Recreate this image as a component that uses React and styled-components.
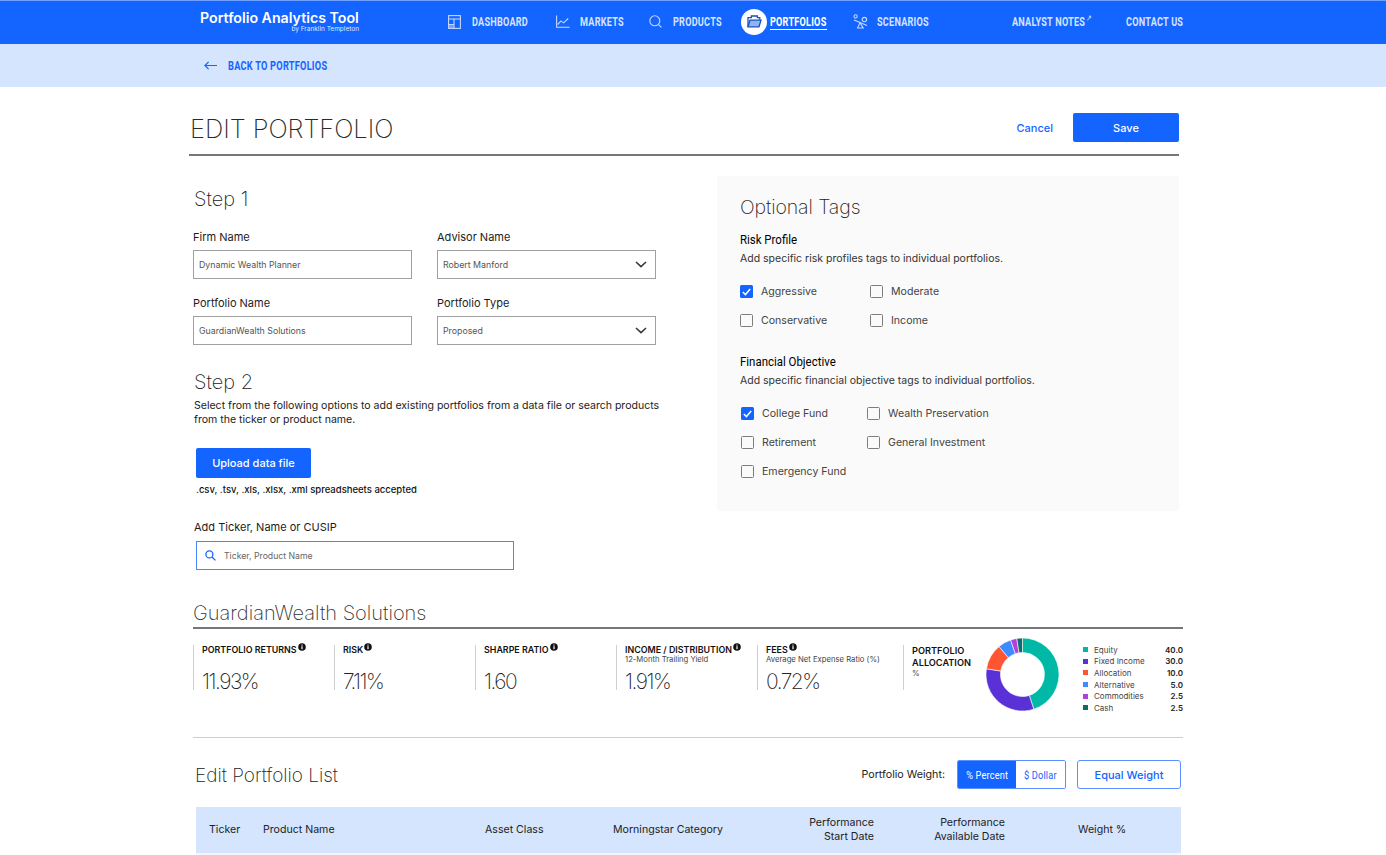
import React from "react";
import styled, { createGlobalStyle } from "styled-components";

const BLUE = "#1464ff";
const PALE = "#d5e5fd";
const BODY = '"Inter", "Liberation Sans", sans-serif';
const NARROW = '"Roboto", "Liberation Sans", sans-serif';

const GlobalStyle = createGlobalStyle`
  html, body { margin: 0; padding: 0; background: #fff; }
  body { font-family: ${BODY}; color: #1c1c1c; }
  * { box-sizing: border-box; }
`;

const navItems = [
  { label: "DASHBOARD", icon: "dashboard", w: 57 },
  { label: "MARKETS", icon: "markets", w: 42 },
  { label: "PRODUCTS", icon: "products", w: 49 },
  { label: "PORTFOLIOS", icon: "portfolios", w: 57, active: true },
  { label: "SCENARIOS", icon: "scenarios", w: 53 },
];

const stats = [
  { title: "PORTFOLIO RETURNS", value: "11.93%", info: true },
  { title: "RISK", value: "7.11%", info: true },
  { title: "SHARPE RATIO", value: "1.60", info: true },
  { title: "INCOME / DISTRIBUTION", sub: "12-Month Trailing Yield", value: "1.91%", info: true },
  { title: "FEES", sub: "Average Net Expense Ratio (%)", value: "0.72%", info: true },
];

// sweep is measured from the picture, the legend numbers are what it prints
const allocation = [
  { name: "Equity", value: "40.0", color: "#00b8a6", sweep: 162 },
  { name: "Fixed Income", value: "30.0", color: "#5a31d6", sweep: 117 },
  { name: "Allocation", value: "10.0", color: "#ff5533", sweep: 41 },
  { name: "Alternative", value: "5.0", color: "#3d8bff", sweep: 21 },
  { name: "Commodities", value: "2.5", color: "#b23fe0", sweep: 10 },
  { name: "Cash", value: "2.5", color: "#0b6e6a", sweep: 9 },
];

function NavIcon({ name }) {
  const common = { fill: "none", stroke: "#c5d9ff", strokeWidth: 1.1 };
  if (name === "dashboard")
    return (
      <svg width="13" height="14" viewBox="0 0 13 14" {...common}>
        <rect x="0.6" y="0.6" width="11.8" height="12.8" />
        <path d="M0.6 4h11.8M6 4v9.4M0.6 9.5H6" />
        <rect x="1" y="10" width="4.6" height="3" fill="#c5d9ff" fillOpacity=".5" stroke="none" />
      </svg>
    );
  if (name === "markets")
    return (
      <svg width="14" height="13" viewBox="0 0 14 13" {...common}>
        <path d="M0.6 0.5v11.7h13" />
        <path d="M1.6 9.5l3.4-3.6 2.6 2 4.6-4.4" />
      </svg>
    );
  if (name === "products")
    return (
      <svg width="13" height="13" viewBox="0 0 13 13" {...common}>
        <circle cx="5.8" cy="5.8" r="5" />
        <path d="M9.4 9.4l3 3" />
      </svg>
    );
  if (name === "portfolios")
    return (
      <svg width="15" height="13" viewBox="0 0 15 13" fill="none" stroke="#1c4fb8" strokeWidth="1.3">
        <path d="M1 11.8V2.6h3.4V1h6v1.6h2.4v2.2" />
        <path d="M1 11.8l2-6.6h11l-2 6.6z" fill="#8fb4f7" />
      </svg>
    );
  return (
    <svg width="15" height="15" viewBox="0 0 15 15" {...common}>
      <circle cx="2.6" cy="2.4" r="1.6" />
      <circle cx="11.4" cy="5.6" r="2.2" />
      <path d="M1 6l13 5.4" />
      <path d="M7 8.6L4.6 14h5.6z" />
    </svg>
  );
}

function InfoDot() {
  return (
    <InfoMark viewBox="0 0 8 8">
      <circle cx="4" cy="4" r="3.8" fill="#111" />
      <rect x="3.4" y="3.2" width="1.2" height="3" fill="#fff" />
      <rect x="3.4" y="1.6" width="1.2" height="1" fill="#fff" />
    </InfoMark>
  );
}

function Chevron() {
  return (
    <ChevronMark width="12" height="7" viewBox="0 0 12 7" fill="none" stroke="#3a3a3a" strokeWidth="1.6">
      <path d="M1 1l5 4.6L11 1" />
    </ChevronMark>
  );
}

function Check({ label, checked }) {
  return (
    <CheckRow>
      <Box $checked={checked}>
        {checked && (
          <svg width="9" height="8" viewBox="0 0 9 8" fill="none" stroke="#fff" strokeWidth="1.5">
            <path d="M0.8 4l2.6 2.6L8.2 1" />
          </svg>
        )}
      </Box>
      {label}
    </CheckRow>
  );
}

function arc(start, sweep, r, R) {
  const pt = (rad, deg) => {
    const a = ((deg - 90) * Math.PI) / 180;
    return `${(R + rad * Math.cos(a)).toFixed(2)} ${(R + rad * Math.sin(a)).toFixed(2)}`;
  };
  const end = start + sweep;
  const big = sweep > 180 ? 1 : 0;
  return `M${pt(R, start)}A${R} ${R} 0 ${big} 1 ${pt(R, end)}L${pt(r, end)}A${r} ${r} 0 ${big} 0 ${pt(r, start)}Z`;
}

function Donut() {
  let at = 0;
  return (
    <DonutWrap width="73" height="73" viewBox="0 0 73 73">
      {allocation.map((s) => {
        const d = arc(at, s.sweep, 22, 36.5);
        at += s.sweep;
        return <path key={s.name} d={d} fill={s.color} stroke="#fff" strokeWidth="0.6" />;
      })}
    </DonutWrap>
  );
}

export default function App() {
  return (
    <Page>
      <GlobalStyle />
      <Header>
        <Logo>
          <LogoName>Portfolio Analytics Tool</LogoName>
          <LogoBy>by Franklin Templeton</LogoBy>
        </Logo>
        <Nav>
          {navItems.map((item) => (
            <NavItem key={item.label} $active={item.active}>
              <IconSpot $active={item.active}>
                <NavIcon name={item.icon} />
              </IconSpot>
              <NavLabel $w={item.w} $active={item.active}>
                <NavText $active={item.active}>{item.label}</NavText>
              </NavLabel>
            </NavItem>
          ))}
        </Nav>
        <NavRight>
          <NavLabel $w={81}>
            <NavText>
              ANALYST NOTES<Sup>↗</Sup>
            </NavText>
          </NavLabel>
          <NavLabel $w={57}>
            <NavText>CONTACT US</NavText>
          </NavLabel>
        </NavRight>
      </Header>

      <SubBar>
        <svg width="13" height="9" viewBox="0 0 13 9" fill="none" stroke={BLUE} strokeWidth="1.2">
          <path d="M13 4.5H1M4.6 0.8L0.9 4.5l3.7 3.7" />
        </svg>
        <BackLink>BACK TO PORTFOLIOS</BackLink>
      </SubBar>

      <Main>
        <TitleRow>
          <Title>EDIT PORTFOLIO</Title>
          <TitleActions>
            <CancelLink>Cancel</CancelLink>
            <PrimaryButton $w={106}>Save</PrimaryButton>
          </TitleActions>
        </TitleRow>

        <Columns>
          <LeftCol>
            <StepHeading>Step 1</StepHeading>
            <FieldGrid>
              <Field>
                <FieldLabel>Firm Name</FieldLabel>
                <Input>Dynamic Wealth Planner</Input>
              </Field>
              <Field>
                <FieldLabel>Advisor Name</FieldLabel>
                <Input>
                  Robert Manford
                  <Chevron />
                </Input>
              </Field>
              <Field>
                <FieldLabel>Portfolio Name</FieldLabel>
                <Input>GuardianWealth Solutions</Input>
              </Field>
              <Field>
                <FieldLabel>Portfolio Type</FieldLabel>
                <Input>
                  Proposed
                  <Chevron />
                </Input>
              </Field>
            </FieldGrid>

            <StepHeading $second>Step 2</StepHeading>
            <StepText>
              Select from the following options to add existing portfolios from a data file or search products
              from the ticker or product name.
            </StepText>
            <UploadBlock>
              <PrimaryButton $w={115} $h={30}>Upload data file</PrimaryButton>
              <Accepted>.csv, .tsv, .xls, .xlsx, .xml spreadsheets accepted</Accepted>
              <TickerLabel>Add Ticker, Name or CUSIP</TickerLabel>
              <SearchBox>
                <svg width="11" height="11" viewBox="0 0 11 11" fill="none" stroke={BLUE} strokeWidth="1.3">
                  <circle cx="4.4" cy="4.4" r="3.5" />
                  <path d="M7 7l3.4 3.4" />
                </svg>
                Ticker, Product Name
              </SearchBox>
            </UploadBlock>
          </LeftCol>

          <TagsPanel>
            <TagsTitle>Optional Tags</TagsTitle>
            <TagHeading>Risk Profile</TagHeading>
            <TagText>Add specific risk profiles tags to individual portfolios.</TagText>
            <CheckGrid $cols="130px 130px">
              <Check label="Aggressive" checked />
              <Check label="Moderate" />
              <Check label="Conservative" />
              <Check label="Income" />
            </CheckGrid>
            <TagHeading $second>Financial Objective</TagHeading>
            <TagText>Add specific financial objective tags to individual portfolios.</TagText>
            <CheckGrid $cols="126px 130px" $shift={1}>
              <Check label="College Fund" checked />
              <Check label="Wealth Preservation" />
              <Check label="Retirement" />
              <Check label="General Investment" />
              <Check label="Emergency Fund" />
            </CheckGrid>
          </TagsPanel>
        </Columns>

        <Summary>
          <SummaryTitle>GuardianWealth Solutions</SummaryTitle>
          <StatsRow>
            {stats.map((s) => (
              <Stat key={s.title}>
                <StatTitle>
                  {s.title}
                  {s.info && <InfoDot />}
                </StatTitle>
                {s.sub && <StatSub>{s.sub}</StatSub>}
                <StatValue>{s.value}</StatValue>
              </Stat>
            ))}
            <AllocationCell>
              <AllocationHead>
                <StatTitle $tall>
                  PORTFOLIO
                  <br />
                  ALLOCATION
                </StatTitle>
                <StatSub>%</StatSub>
              </AllocationHead>
              <Donut />
              <Legend>
                {allocation.map((a) => (
                  <LegendRow key={a.name}>
                    <Swatch $color={a.color} />
                    <LegendName>{a.name}</LegendName>
                    <LegendValue>{a.value}</LegendValue>
                  </LegendRow>
                ))}
              </Legend>
            </AllocationCell>
          </StatsRow>
        </Summary>

        <ListHead>
          <ListTitle>Edit Portfolio List</ListTitle>
          <WeightTools>
            <WeightLabel>Portfolio Weight:</WeightLabel>
            <Toggle>
              <ToggleOption $on>
                <ToggleText>% Percent</ToggleText>
              </ToggleOption>
              <ToggleOption>
                <ToggleText>$ Dollar</ToggleText>
              </ToggleOption>
            </Toggle>
            <OutlineButton>Equal Weight</OutlineButton>
          </WeightTools>
        </ListHead>

        <TableHead>
          <span>Ticker</span>
          <span>Product Name</span>
          <span>Asset Class</span>
          <span>Morningstar Category</span>
          <RightCell>
            Performance
            <br />
            Start Date
          </RightCell>
          <RightCell>
            Performance
            <br />
            Available Date
          </RightCell>
          <WeightCell>Weight %</WeightCell>
        </TableHead>
        <TableRowStub />
      </Main>
    </Page>
  );
}

const Page = styled.div`
  height: 100vh;
  overflow: hidden;
`;

const Header = styled.header`
  height: 44px;
  background: ${BLUE};
  border-top: 1px solid #6f9fff;
  display: flex;
  align-items: center;
  padding: 0 203px 2px 200px;
`;

const Logo = styled.div`
  width: 248px;
  display: flex;
  flex-direction: column;
`;

const LogoName = styled.div`
  width: 159px;
  font-size: 14.2px;
  font-weight: 600;
  line-height: 15px;
  color: #fff;
  white-space: nowrap;
`;

const LogoBy = styled.div`
  width: 159px;
  text-align: right;
  font-size: 6.5px;
  line-height: 8px;
  color: #dfe9ff;
`;

const Nav = styled.nav`
  display: flex;
  align-items: center;
  gap: 27px;
`;

const NavItem = styled.div`
  display: flex;
  align-items: center;
  gap: ${(p) => (p.$active ? "3px" : "9px")};
  margin: 0 ${(p) => (p.$active ? "-1px" : "0")} 0 ${(p) => (p.$active ? "-8px" : "0")};
`;

const IconSpot = styled.span`
  display: flex;
  align-items: center;
  justify-content: ${(p) => (p.$active ? "center" : "flex-start")};
  width: ${(p) => (p.$active ? "26px" : "15px")};
  height: ${(p) => (p.$active ? "26px" : "15px")};
  border-radius: 50%;
  background: ${(p) => (p.$active ? "#fff" : "transparent")};
`;

const NavLabel = styled.span`
  display: flex;
  align-items: flex-start;
  width: ${(p) => p.$w}px;
  height: ${(p) => (p.$active ? "15px" : "14px")};
  margin-top: ${(p) => (p.$active ? "1px" : "0")};
  border-bottom: ${(p) => (p.$active ? "1px solid #fff" : "0")};
`;

const NavText = styled.span`
  display: block;
  font-family: ${NARROW};
  font-weight: 700;
  font-size: 12px;
  line-height: 14px;
  letter-spacing: 0.3px;
  color: ${(p) => (p.$active ? "#fff" : "#d5e3ff")};
  white-space: nowrap;
  transform: scaleX(0.76);
  transform-origin: 0 50%;
`;

const Sup = styled.sup`
  font-size: 9px;
  font-weight: 400;
  line-height: 0;
  margin-left: 1px;
`;

const NavRight = styled.div`
  margin-left: auto;
  display: flex;
  gap: 33px;
`;

const SubBar = styled.div`
  height: 43px;
  background: ${PALE};
  display: flex;
  align-items: center;
  gap: 11px;
  padding-left: 204px;
`;

const BackLink = styled.span`
  font-family: ${NARROW};
  font-weight: 700;
  font-size: 12px;
  letter-spacing: 0.3px;
  color: ${BLUE};
  transform: scaleX(0.77);
  transform-origin: 0 50%;
`;

const Main = styled.main`
  width: 994px;
  margin-left: 189px;
`;

const TitleRow = styled.div`
  width: 990px;
  display: flex;
  align-items: center;
  justify-content: space-between;
  padding: 26px 0 12px;
  border-bottom: 2px solid #77777a;
`;

const Title = styled.h1`
  margin: 2px 0 0 1px;
  font-size: 25.5px;
  line-height: 27px;
  font-weight: 200;
  letter-spacing: -0.05px;
  color: #2a2a2a;
`;

const TitleActions = styled.div`
  display: flex;
  align-items: center;
  gap: 20px;
`;

const CancelLink = styled.span`
  font-size: 11px;
  font-weight: 500;
  color: ${BLUE};
`;

const PrimaryButton = styled.div`
  width: ${(p) => p.$w}px;
  height: ${(p) => p.$h || 29}px;
  border-radius: 2px;
  background: ${BLUE};
  color: #fff;
  font-size: 11px;
  font-weight: 500;
  display: flex;
  align-items: center;
  justify-content: center;
`;

const Columns = styled.div`
  display: flex;
  margin-top: 20px;
  padding-left: 4px;
`;

const LeftCol = styled.div`
  width: 524px;
  padding-top: 10px;
`;

const StepHeading = styled.h2`
  margin: ${(p) => (p.$second ? "24px" : "0")} 0 0 1px;
  font-size: 20px;
  line-height: 26px;
  font-weight: 200;
  color: #222;
`;

const FieldGrid = styled.div`
  display: grid;
  grid-template-columns: 219px 219px;
  column-gap: 25px;
  row-gap: 17px;
  margin-top: 18px;
`;

const Field = styled.div``;

const FieldLabel = styled.div`
  font-size: 11px;
  line-height: 14px;
  color: #1c1c1c;
  margin-bottom: 6px;
`;

const Input = styled.div`
  height: 29px;
  border: 1px solid #a0a0a0;
  border-bottom-width: 1.5px;
  display: flex;
  align-items: center;
  justify-content: space-between;
  padding: 0 8px 0 5px;
  font-size: 8.8px;
  color: #555;
`;

const ChevronMark = styled.svg`
  flex: none;
`;

const StepText = styled.p`
  margin: 4px 0 0 1px;
  width: 480px;
  font-size: 10.55px;
  line-height: 14px;
  color: #222;
`;

const UploadBlock = styled.div`
  margin-top: 21px;
  padding-left: 3px;
`;

const Accepted = styled.div`
  margin-top: 6px;
  font-size: 9.5px;
  line-height: 12px;
  font-weight: 500;
  color: #111;
`;

const TickerLabel = styled.div`
  margin: 24px 0 0 -2px;
  font-size: 11px;
  line-height: 14px;
  color: #1c1c1c;
`;

const SearchBox = styled.div`
  margin-top: 7px;
  width: 318px;
  height: 29px;
  border: 1px solid #4d86ff;
  display: flex;
  align-items: center;
  gap: 8px;
  padding-left: 8px;
  font-size: 8.7px;
  color: #666;
`;

const TagsPanel = styled.section`
  width: 462px;
  height: 335px;
  background: #fafafa;
  padding: 19px 0 0 23px;
`;

const TagsTitle = styled.h2`
  margin: 0;
  font-size: 19.5px;
  line-height: 24px;
  font-weight: 200;
  letter-spacing: -0.1px;
  color: #222;
`;

const TagHeading = styled.h3`
  margin: ${(p) => (p.$second ? "19px" : "13px")} 0 0;
  font-family: ${NARROW};
  font-size: 13px;
  line-height: 16px;
  font-weight: 400;
  color: #000;
  transform: scaleX(0.88);
  transform-origin: 0 50%;
`;

const TagText = styled.p`
  margin: 4px 0 0;
  font-size: 10.5px;
  line-height: 14px;
  color: #333;
`;

const CheckGrid = styled.div`
  display: grid;
  grid-template-columns: ${(p) => p.$cols};
  grid-auto-rows: 29px;
  margin-top: 11px;
  margin-left: ${(p) => p.$shift || 0}px;
`;

const CheckRow = styled.label`
  display: flex;
  align-items: center;
  gap: 8px;
  font-size: 10.6px;
  color: #444;
`;

const Box = styled.span`
  width: 13px;
  height: 13px;
  border-radius: 1.5px;
  display: flex;
  align-items: center;
  justify-content: center;
  background: ${(p) => (p.$checked ? BLUE : "transparent")};
  border: ${(p) => (p.$checked ? "0" : "1px solid #7d7d7d")};
`;

const Summary = styled.section`
  margin-top: 30px;
  margin-left: 4px;
`;

const SummaryTitle = styled.h2`
  margin: 0;
  font-size: 20px;
  line-height: 26px;
  font-weight: 200;
  color: #333;
  border-bottom: 2px solid #77777a;
  padding-bottom: 1px;
`;

const StatsRow = styled.div`
  margin-top: 16px;
  height: 93px;
  border-bottom: 1px solid #cfcfcf;
  display: flex;
  align-items: flex-start;
`;

const Stat = styled.div`
  width: 141px;
  height: 45px;
  border-left: 1px solid #cfcfcf;
  padding-left: 8px;
  position: relative;
`;

const StatTitle = styled.div`
  font-size: ${(p) => (p.$tall ? "9.2px" : "8.9px")};
  line-height: ${(p) => (p.$tall ? "11.5px" : "9px")};
  font-weight: 600;
  color: #111;
  white-space: nowrap;
  display: ${(p) => (p.$tall ? "block" : "flex")};
  align-items: flex-start;
`;

const InfoMark = styled.svg`
  width: 8px;
  height: 8px;
  margin: -2px 0 0 1px;
`;

const StatSub = styled.div`
  font-size: 7.7px;
  line-height: 11px;
  color: #444;
`;

const StatValue = styled.div`
  position: absolute;
  left: 8px;
  bottom: -4px;
  font-size: 21px;
  line-height: 24px;
  font-weight: 200;
  letter-spacing: -1.5px;
  color: #222;
`;

const AllocationCell = styled.div`
  flex: 1;
  display: flex;
  align-items: flex-start;
  margin-left: 5px;
`;

const AllocationHead = styled.div`
  width: 83px;
  height: 45px;
  border-left: 1px solid #cfcfcf;
  padding-left: 8px;
`;

const DonutWrap = styled.svg`
  flex: none;
  margin: -7px 0 0 0;
`;

const Legend = styled.div`
  width: 100px;
  margin: -1px 0 0 24px;
`;

const LegendRow = styled.div`
  display: flex;
  align-items: center;
  height: 11.6px;
  font-size: 8px;
  color: #444;
`;

const Swatch = styled.span`
  width: 5px;
  height: 5px;
  background: ${(p) => p.$color};
  margin-right: 6px;
`;

const LegendName = styled.span`
  flex: 1;
`;

const LegendValue = styled.span`
  font-weight: 600;
  color: #222;
`;

const ListHead = styled.div`
  margin: 22px 2px 0 6px;
  display: flex;
  align-items: center;
  justify-content: space-between;
`;

const ListTitle = styled.h2`
  margin: 3px 0 0;
  font-size: 19px;
  line-height: 26px;
  font-weight: 200;
  color: #222;
`;

const WeightTools = styled.div`
  display: flex;
  align-items: center;
`;

const WeightLabel = styled.span`
  font-size: 10.7px;
  color: #222;
  margin-right: 12px;
`;

const Toggle = styled.div`
  display: flex;
  width: 109px;
  height: 29px;
  border: 1px solid #5b8fff;
  border-radius: 2px;
  overflow: hidden;
  margin-right: 11px;
`;

const ToggleOption = styled.span`
  flex: ${(p) => (p.$on ? "0 0 58px" : "1")};
  display: flex;
  align-items: center;
  justify-content: center;
  background: ${(p) => (p.$on ? BLUE : "#fff")};
  color: ${(p) => (p.$on ? "#fff" : BLUE)};
`;

const ToggleText = styled.span`
  font-family: ${NARROW};
  font-size: 11.5px;
  letter-spacing: 0.2px;
  white-space: nowrap;
  transform: scaleX(0.8);
`;

const OutlineButton = styled.div`
  width: 104px;
  height: 29px;
  border: 1px solid #5b8fff;
  border-radius: 3px;
  display: flex;
  align-items: center;
  justify-content: center;
  font-size: 11px;
  font-weight: 500;
  color: ${BLUE};
`;

const TableHead = styled.div`
  margin: 18px 2px 0 7px;
  height: 46px;
  background: ${PALE};
  display: grid;
  grid-template-columns: 54px 222px 128px 120px 141px 131px 1fr;
  align-items: center;
  padding: 0 0 1px 13px;
  font-size: 10.6px;
  line-height: 14px;
  color: #222;
`;

const RightCell = styled.span`
  text-align: right;
`;

const WeightCell = styled.span`
  padding-left: 73px;
`;

const TableRowStub = styled.div`
  margin: 0 2px 0 7px;
  height: 40px;
  background: #f6f6f6;
`;
